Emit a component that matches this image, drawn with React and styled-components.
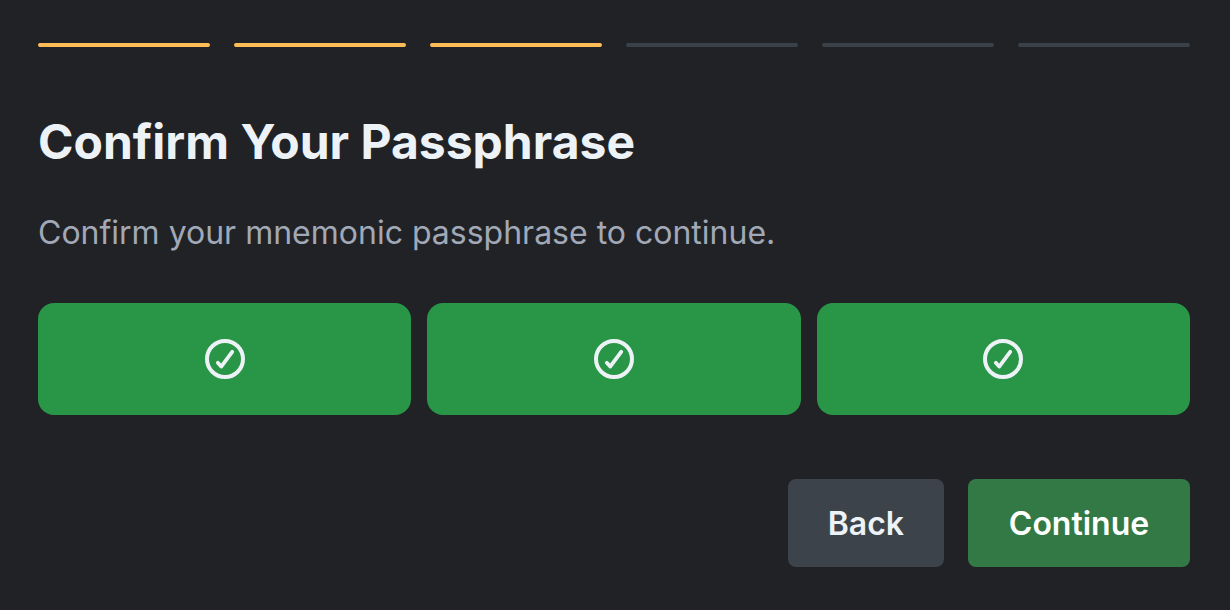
import React from "react";
import styled, { createGlobalStyle } from "styled-components";

const GlobalStyle = createGlobalStyle`
  * { box-sizing: border-box; }
  body {
    margin: 0;
    min-height: 100vh;
    background: #212226;
    font-family: Inter, "Liberation Sans", sans-serif;
  }
`;

const Page = styled.main`
  padding: 43px 40px 43px 38px;
`;

const Steps = styled.ol`
  display: flex;
  gap: 24px;
  margin: 0;
  padding: 0;
  list-style: none;
`;

const Step = styled.li`
  flex: 1;
  height: 4px;
  border-radius: 2px;
  background: ${(p) => (p.$done ? "#ffbc57" : "#3a4149")};
`;

const Title = styled.h1`
  margin: 67px 0 0;
  font-size: 48px;
  line-height: 56px;
  font-weight: 700;
  color: #edf2f6;
`;

const Description = styled.p`
  margin: 42px 0 0;
  font-size: 32px;
  line-height: 42px;
  color: #a1a9b7;
`;

const Words = styled.div`
  display: grid;
  grid-template-columns: repeat(3, 1fr);
  gap: 16px;
  margin-top: 49px;
`;

const WordCard = styled.div`
  display: flex;
  align-items: center;
  justify-content: center;
  height: 112px;
  border-radius: 16px;
  background: #299647;
`;

const Actions = styled.div`
  display: flex;
  justify-content: flex-end;
  gap: 24px;
  margin-top: 64px;
`;

const Button = styled.button`
  height: 88px;
  min-width: ${(p) => (p.$primary ? "222px" : "156px")};
  padding: 2px 40px 0;
  border: 0;
  border-radius: 8px;
  font-family: inherit;
  font-size: 32px;
  line-height: 42px;
  font-weight: 600;
  color: ${(p) => (p.$primary ? "#ffffff" : "#edf2f6")};
  background: ${(p) => (p.$primary ? "#327945" : "#3c434a")};
  cursor: pointer;
`;

function CheckIcon() {
  return (
    <svg width="40" height="40" viewBox="0 0 40 40" fill="none" stroke="#edf2f6" role="img" aria-label="Confirmed">
      <circle cx="20" cy="20" r="18" strokeWidth="4" />
      <path d="M12.8 23.8 L16.2 27.6 L27.2 12.8" strokeWidth="3.8" strokeLinecap="round" strokeLinejoin="round" />
    </svg>
  );
}

const steps = [true, true, true, false, false, false];
const words = [1, 2, 3];

export default function App() {
  return (
    <>
      <GlobalStyle />
      <Page>
        <Steps>
          {steps.map((done, i) => (
            <Step key={i} $done={done} />
          ))}
        </Steps>
        <Title>Confirm Your Passphrase</Title>
        <Description>Confirm your mnemonic passphrase to continue.</Description>
        <Words>
          {words.map((n) => (
            <WordCard key={n}>
              <CheckIcon />
            </WordCard>
          ))}
        </Words>
        <Actions>
          <Button type="button">Back</Button>
          <Button type="button" $primary>Continue</Button>
        </Actions>
      </Page>
    </>
  );
}
